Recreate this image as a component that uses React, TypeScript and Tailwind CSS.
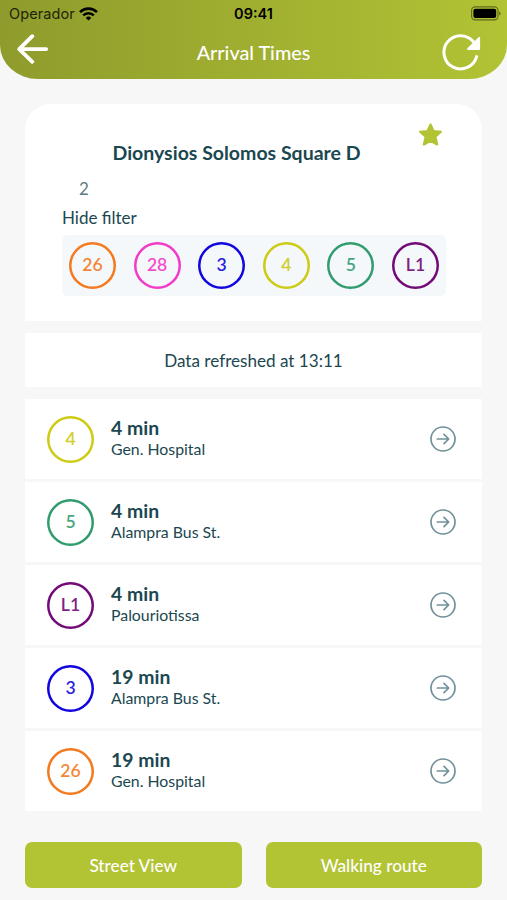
import { useState } from "react";
import clsx from "clsx";

interface Line {
  name: string;
  color: string;
}

interface Arrival {
  id: number;
  line: string;
  minutes: number;
  destination: string;
}

const LINES: Line[] = [
  { name: "26", color: "text-[#f37a1f]" },
  { name: "28", color: "text-[#f23cc8]" },
  { name: "3", color: "text-[#1206e0]" },
  { name: "4", color: "text-[#cdcb14]" },
  { name: "5", color: "text-[#339c6e]" },
  { name: "L1", color: "text-[#720a78]" },
];

const ARRIVALS: Arrival[] = [
  { id: 1, line: "4", minutes: 4, destination: "Gen. Hospital" },
  { id: 2, line: "5", minutes: 4, destination: "Alampra Bus St." },
  { id: 3, line: "L1", minutes: 4, destination: "Palouriotissa" },
  { id: 4, line: "3", minutes: 19, destination: "Alampra Bus St." },
  { id: 5, line: "26", minutes: 19, destination: "Gen. Hospital" },
];

const LineBadge = ({ name }: { name: string }) => {
  const line = LINES.find((item) => item.name === name);
  return (
    <span
      className={clsx(
        "flex size-[47px] shrink-0 items-center justify-center rounded-full text-[17.6px] font-semibold shadow-[inset_0_0_0_2.5px_currentColor]",
        line?.color
      )}
    >
      <span className="opacity-90">{name}</span>
    </span>
  );
};

const StatusBar = () => (
  <div className="grid h-[27px] grid-cols-3 items-center pl-[9px] pr-[6px] font-['Inter',sans-serif] text-black">
    <div className="flex items-center gap-[4px]">
      <span className="pt-[1px] text-[14.5px] leading-none tracking-[0.1px] text-[#20240a]">Operador</span>
      <svg width="19" height="14" viewBox="0 0 19 14" fill="none" stroke="currentColor" strokeWidth="2.6">
        <path d="M1 5.1a12.2 12.2 0 0 1 17 0" />
        <path d="M4.2 8.4a7.6 7.6 0 0 1 10.6 0" />
        <path d="M9.5 13.6 6.8 10.9a3.9 3.9 0 0 1 5.4 0Z" fill="currentColor" stroke="none" />
      </svg>
    </div>
    <span className="-ml-[3px] pt-[1px] text-center text-[14.5px] font-semibold leading-none">09:41</span>
    <svg className="justify-self-end" width="30" height="15" viewBox="0 0 30 15">
      <rect x="0.6" y="0.9" width="26.4" height="13" rx="3.6" fill="none" stroke="#5f6a1c" strokeWidth="1.1" />
      <rect x="2.4" y="2.7" width="22.8" height="9.4" rx="2" fill="#000" />
      <path d="M28.2 5.2c1.8.7 1.8 3.7 0 4.4Z" fill="#5f6a1c" />
    </svg>
  </div>
);

const App: React.FC = () => {
  const [showFilter, setShowFilter] = useState<boolean>(true);
  const [favourite, setFavourite] = useState<boolean>(true);

  return (
    <div className="flex h-[900px] w-[507px] flex-col overflow-hidden bg-[#f7f7f7] font-['Lato',sans-serif] text-[#1b4750]">
      <header className="h-[79px] shrink-0 rounded-b-[38px_34px] bg-linear-to-r from-[#8f9b2c] to-[#b2c334] text-white">
        <StatusBar />
        <div className="grid h-[52px] grid-cols-[1fr_auto_1fr] items-center pl-[16px] pr-[16px]">
          <button aria-label="Back" className="-mt-[8px] justify-self-start">
            <svg width="34" height="30" viewBox="0 0 34 30" fill="none" stroke="currentColor" strokeWidth="3.8" strokeLinecap="round" strokeLinejoin="round">
              <path d="M16.3 2.2 3.2 15.1l13.1 12.7M3.2 15.1h27" />
            </svg>
          </button>
          <h1 className="text-[19.8px] font-medium leading-none">Arrival Times</h1>
          <button aria-label="Refresh" className="-mt-[3px] mr-[9px] justify-self-end">
            <svg width="40" height="38" viewBox="0 0 40 38" fill="none">
              <path d="M34.6 23.6A16.6 16.6 0 1 1 31.4 8.8" stroke="currentColor" strokeWidth="3" strokeLinecap="round" />
              <path d="M37.2 4.8v11.2H26Z" fill="currentColor" stroke="currentColor" strokeWidth="1.8" strokeLinejoin="round" />
            </svg>
          </button>
        </div>
      </header>

      <main className="flex flex-col px-[25px] pt-[25px]">
        <section className="relative h-[217px] rounded-t-[26px] bg-white px-[37px] pt-[36px]">
          <button
            aria-label="Favourite"
            onClick={() => setFavourite(!favourite)}
            className="absolute right-[39px] top-[18px] text-[#b2c334]"
          >
            <svg width="25" height="25" viewBox="0 0 25 25" fill={favourite ? "currentColor" : "none"} stroke="currentColor" strokeWidth="2.2" strokeLinejoin="round">
              <path d="m12.5 2.4 3 6.6 7.4.8-5.5 4.9 1.7 7.8-6.6-3.6-6.6 3.6 1.7-7.8-5.5-4.9 7.4-.8Z" />
            </svg>
          </button>
          <h2 className="pr-[34px] text-center text-[19.5px] font-bold leading-[26px] whitespace-nowrap">
            Dionysios Solomos Square D
          </h2>
          <p className="mt-[11px] pl-[17px] text-[17px] leading-6 text-[#5b7c84]">2</p>
          <button
            onClick={() => setShowFilter(!showFilter)}
            className="mt-[5px] block text-[17px] leading-6"
          >
            {showFilter ? "Hide filter" : "Show filter"}
          </button>
          {showFilter && (
            <div className="-mr-[1px] mt-[5px] flex h-[61px] items-center justify-between rounded-[5px] bg-[#f4f8fb] px-[7px]">
              {LINES.map((line) => (
                <LineBadge key={line.name} name={line.name} />
              ))}
            </div>
          )}
        </section>

        <p className="mt-[12px] flex h-[54px] items-center justify-center bg-white pt-[2px] text-[17.1px]">
          Data refreshed at 13:11
        </p>

        <ul className="mt-[12px] flex flex-col gap-[3px]">
          {ARRIVALS.map((arrival) => (
            <li key={arrival.id} className="flex h-[80px] items-center bg-white pl-[22px] pr-[26px]">
              <LineBadge name={arrival.line} />
              <div className="-mt-[2px] ml-[17px] flex-1">
                <p className="text-[19.4px] font-bold leading-[22px]">{arrival.minutes} min</p>
                <p className="text-[15.85px] leading-[20px]">{arrival.destination}</p>
              </div>
              <svg width="26" height="26" viewBox="0 0 26 26" fill="none" stroke="#71929a" strokeWidth="1.7" strokeLinecap="round" strokeLinejoin="round">
                <circle cx="13" cy="13" r="12" />
                <path d="M7.3 13h11.2M14 8.3l4.7 4.7-4.7 4.7" />
              </svg>
            </li>
          ))}
        </ul>

        <div className="mt-[31px] grid grid-cols-2 gap-[24px] text-[17.2px] font-medium text-white">
          <button className="h-[46px] rounded-[7px] bg-[#b2c334] pt-[1px]">Street View</button>
          <button className="h-[46px] rounded-[7px] bg-[#b2c334] pt-[1px]">Walking route</button>
        </div>
      </main>
    </div>
  );
};

export default App;
